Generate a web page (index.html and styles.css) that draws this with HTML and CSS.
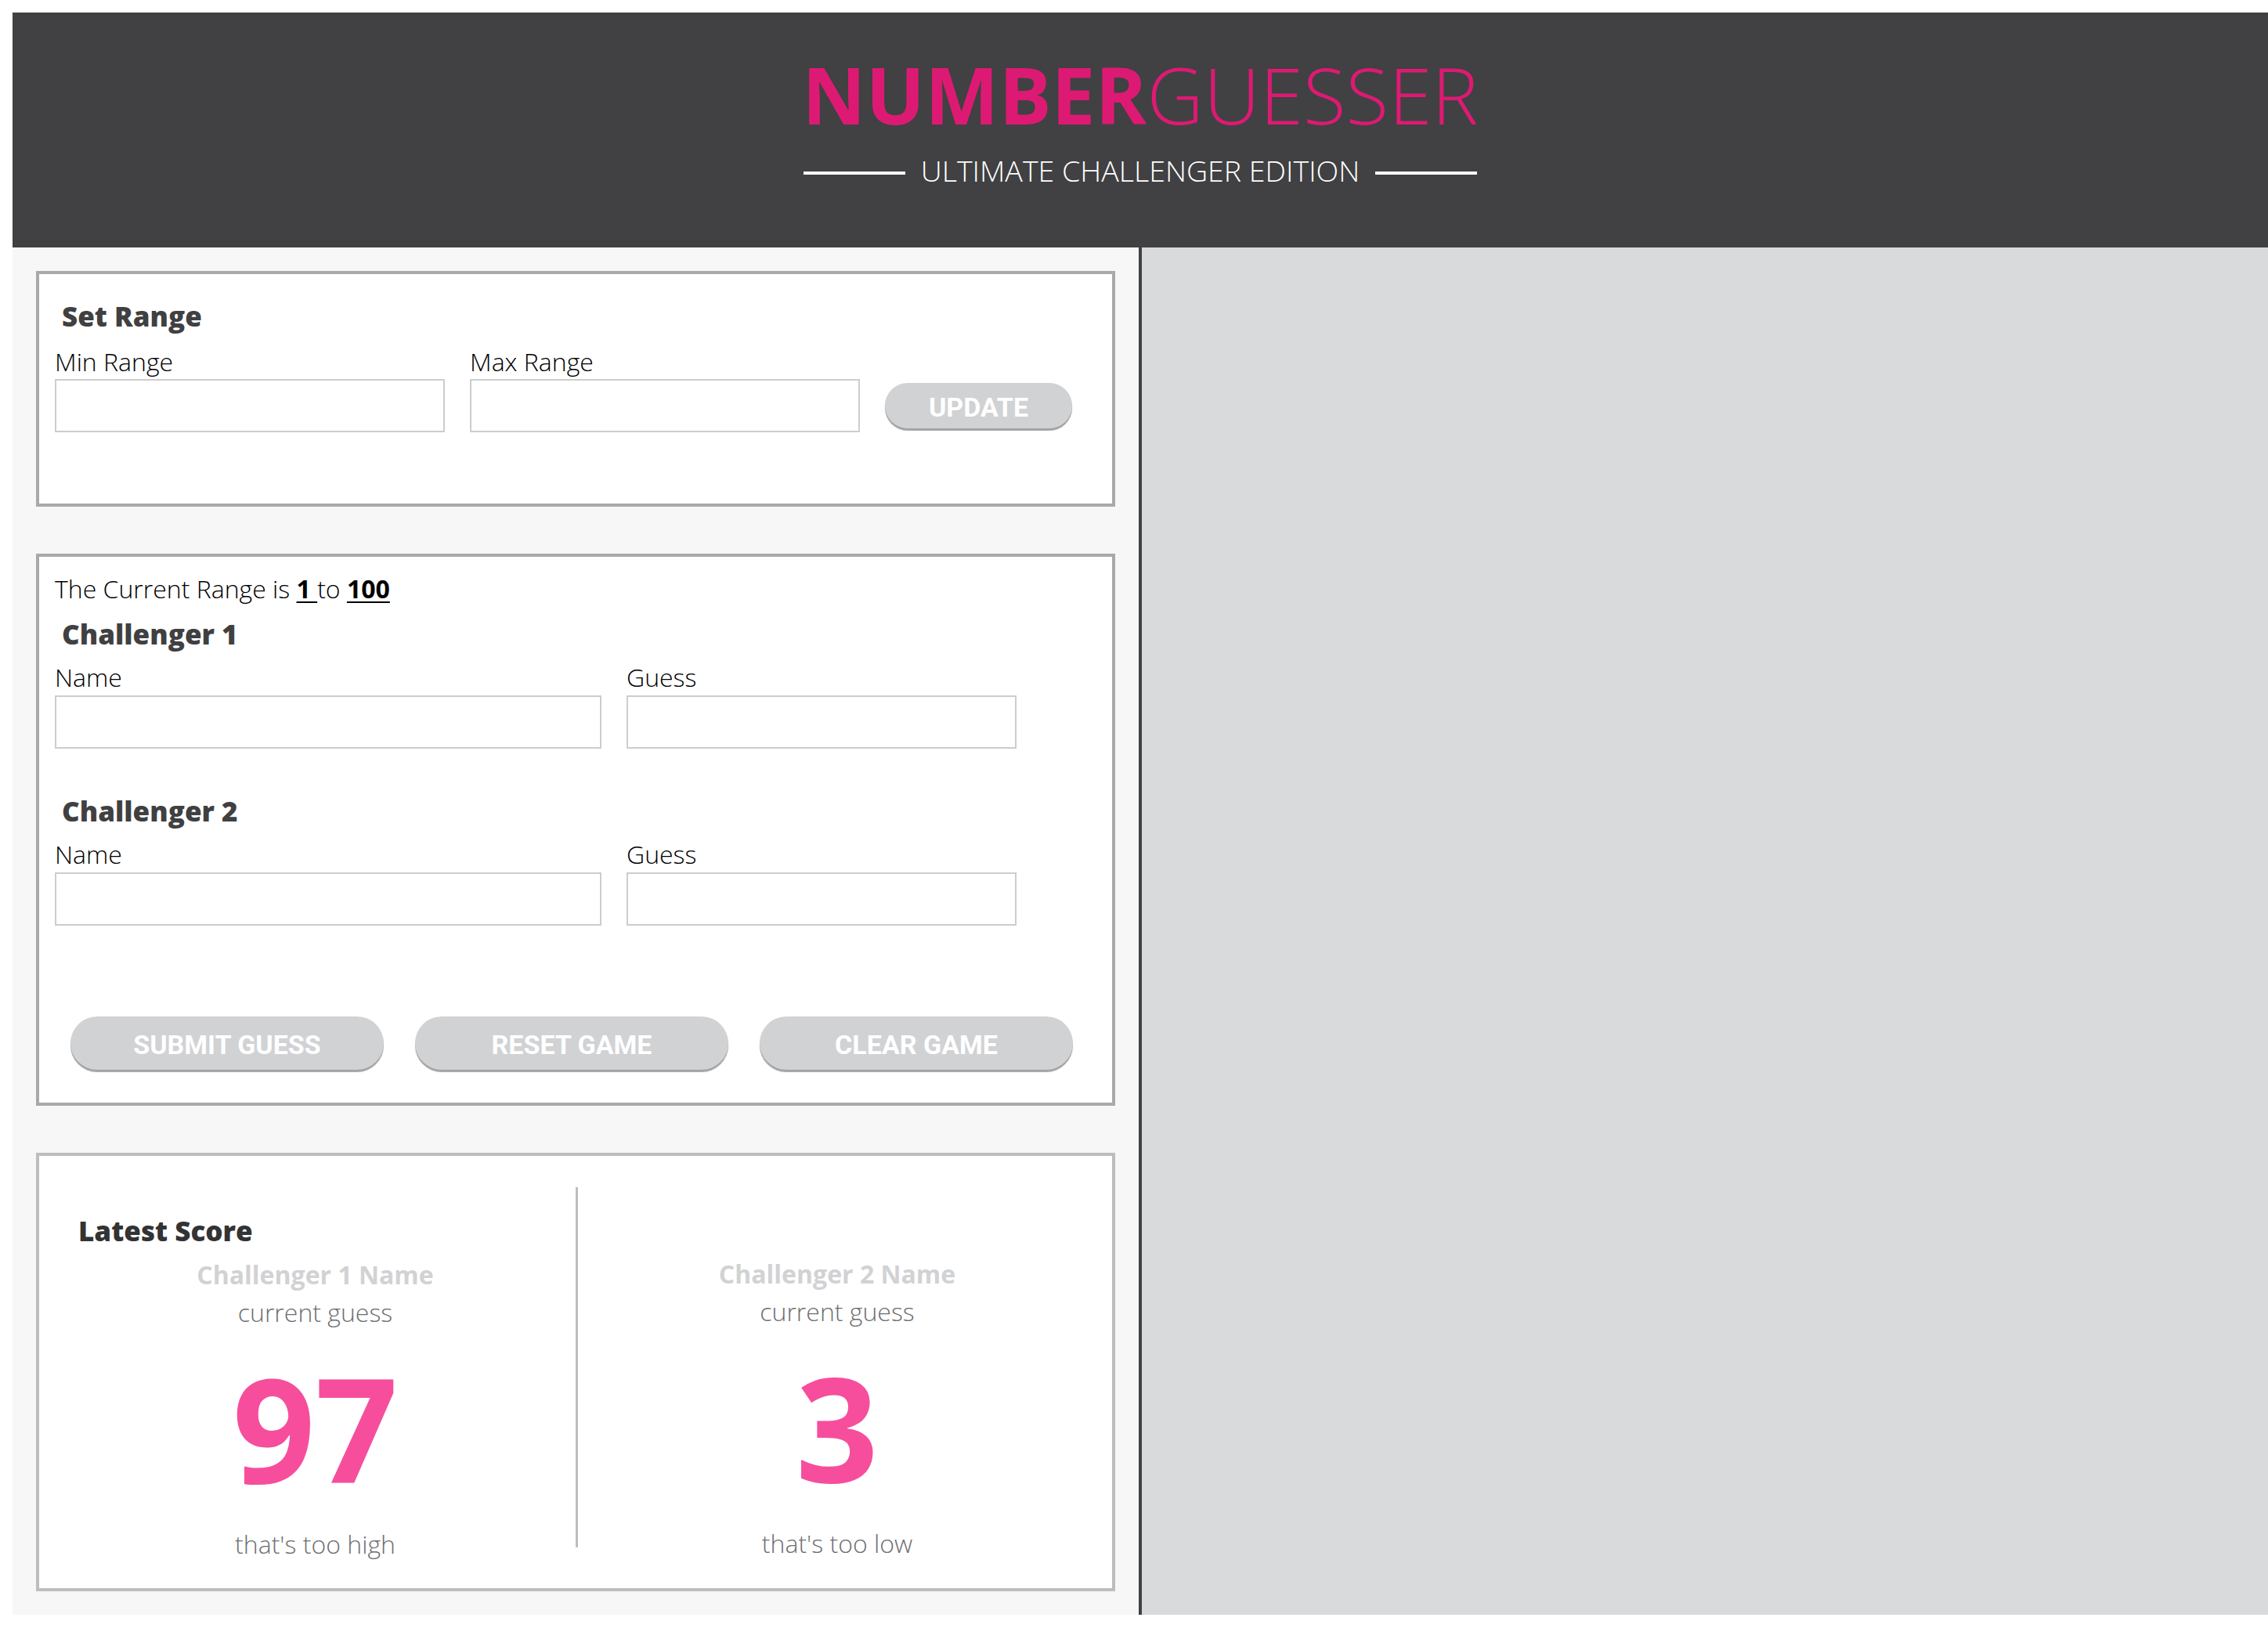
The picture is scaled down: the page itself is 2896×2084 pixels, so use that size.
FILE: index.html
```html
<!DOCTYPE html>
<html lang="en">
<head>
<meta charset="utf-8">
<title>Number Guesser</title>
<link rel="stylesheet" href="styles.css">
</head>
<body>
<header class="masthead">
  <h1 class="title"><span class="title-bold">NUMBER</span><span class="title-light">GUESSER</span></h1>
  <div class="subtitle">
    <span class="rule"></span>
    <span class="subtitle-text">ULTIMATE CHALLENGER EDITION</span>
    <span class="rule"></span>
  </div>
</header>
<main class="layout">
  <section class="game-column">
    <form class="card card-range">
      <h2 class="card-heading">Set Range</h2>
      <div class="field-row field-row-range">
        <label class="field">
          <span class="field-label">Min Range</span>
          <input class="field-input field-input-sm" type="text">
        </label>
        <label class="field">
          <span class="field-label">Max Range</span>
          <input class="field-input field-input-sm" type="text">
        </label>
        <button class="pill pill-update" type="button">UPDATE</button>
      </div>
    </form>

    <form class="card card-guess">
      <p class="range-text">The Current Range is <span class="range-num">1 </span>to <span class="range-num">100</span></p>
      <h2 class="card-heading heading-c1">Challenger 1</h2>
      <div class="field-row field-row-guess">
        <label class="field">
          <span class="field-label">Name</span>
          <input class="field-input field-input-lg" type="text">
        </label>
        <label class="field">
          <span class="field-label">Guess</span>
          <input class="field-input field-input-sm" type="text">
        </label>
      </div>
      <h2 class="card-heading heading-c2">Challenger 2</h2>
      <div class="field-row field-row-guess">
        <label class="field">
          <span class="field-label">Name</span>
          <input class="field-input field-input-lg" type="text">
        </label>
        <label class="field">
          <span class="field-label">Guess</span>
          <input class="field-input field-input-sm" type="text">
        </label>
      </div>
      <div class="button-row">
        <button class="pill pill-wide" type="button">SUBMIT GUESS</button>
        <button class="pill pill-wide" type="button">RESET GAME</button>
        <button class="pill pill-wide" type="button">CLEAR GAME</button>
      </div>
    </form>

    <section class="card card-score">
      <div class="score-col score-col-left">
        <h2 class="score-heading">Latest Score</h2>
        <p class="score-name">Challenger 1 Name</p>
        <p class="score-label">current guess</p>
        <p class="score-number">97</p>
        <p class="score-result">that's too high</p>
      </div>
      <div class="score-col score-col-right">
        <p class="score-name">Challenger 2 Name</p>
        <p class="score-label">current guess</p>
        <p class="score-number">3</p>
        <p class="score-result">that's too low</p>
      </div>
    </section>
  </section>
  <aside class="side-panel"></aside>
</main>
</body>
</html>
```

FILE: styles.css
```css
* {
  box-sizing: border-box;
}

body {
  margin: 16px 0 0 16px;
  font-family: "Open Sans", "Liberation Sans", sans-serif;
  color: #000;
  background: #fff;
}

/* Header */
.masthead {
  height: 300px;
  background: #414042;
  padding-top: 54px;
  display: flex;
  flex-direction: column;
  align-items: center;
}

.title {
  margin: 0;
  font-size: 100px;
  line-height: 100px;
  color: #dd1a73;
  font-weight: 700;
}

.title-light {
  font-weight: 300;
}

.subtitle {
  margin-top: 28px;
  display: flex;
  align-items: center;
  gap: 20px;
}

.rule {
  width: 130px;
  height: 4px;
  background: #fff;
  margin-top: 7px;
}

.subtitle-text {
  font-size: 37.5px;
  line-height: 39px;
  font-weight: 300;
  color: #fff;
}

/* Layout */
.layout {
  display: flex;
}

.game-column {
  width: 1442px;
  flex: none;
  background: #f7f7f7;
  border-right: 4px solid #414042;
  padding: 30px;
  display: flex;
  flex-direction: column;
  gap: 60px;
}

.side-panel {
  flex: 1;
  background: #d9dadc;
}

/* Cards */
.card {
  margin: 0;
  background: #fff;
  border: 4px solid #a9a9a9;
  padding: 0 20px;
}

.card-heading {
  margin: 0 0 0 9px;
  font-size: 35px;
  line-height: 34px;
  font-weight: 800;
  color: #404041;
}

.card-range {
  padding-top: 37px;
  padding-bottom: 91px;
}

.field-row {
  display: flex;
  align-items: flex-end;
  gap: 32px;
}

.field-row-range {
  margin-top: 25px;
}

.field {
  display: flex;
  flex-direction: column;
  gap: 6px;
}

.field-label {
  font-size: 32px;
  line-height: 32px;
  font-weight: 300;
  color: #000;
}

.field-input {
  display: block;
  margin: 0;
  height: 68px;
  border: 2px solid #cdcdcd;
  background: #fff;
  padding: 0 8px;
  font: inherit;
}

.field-input-sm {
  width: 498px;
}

.field-input-lg {
  width: 698px;
}

.pill {
  margin: 0;
  border: none;
  background: #d1d2d4;
  color: #fff;
  font-family: Roboto, "Liberation Sans", sans-serif;
  font-weight: 700;
  font-size: 34px;
  padding: 3px 0 0;
  box-shadow: 0 3px 1px #a3a3a3;
}

.pill-update {
  width: 239px;
  height: 58px;
  border-radius: 29px;
  margin-bottom: 5px;
}

.card-guess {
  padding-top: 25px;
  padding-bottom: 42px;
}

.range-text {
  margin: 0;
  font-size: 32px;
  line-height: 32px;
  font-weight: 300;
}

.range-num {
  font-weight: 700;
  text-decoration: underline;
  text-decoration-thickness: 2px;
  text-underline-offset: 4px;
}

.heading-c1 {
  margin-top: 25px;
}

.heading-c2 {
  margin-top: 63px;
}

.field-row-guess {
  margin-top: 22px;
}

.field-row-guess .field {
  gap: 7px;
}

.button-row {
  display: flex;
  gap: 40px;
  margin: 116px 0 0 20px;
}

.pill-wide {
  width: 400px;
  height: 68px;
  border-radius: 34px;
}

/* Score card */
.card-score {
  border-color: #bdbdbd;
  padding: 40px 20px 52px;
  display: grid;
  grid-template-columns: 1fr 1fr;
}

.score-col {
  height: 460px;
  display: flex;
  flex-direction: column;
  align-items: center;
}

.score-col-right {
  border-left: 3px solid #bdbdbd;
  padding-top: 72px;
}

.score-col p {
  margin: 0;
}

.score-heading {
  align-self: flex-start;
  margin: 39px 0 0 30px;
  font-size: 35px;
  line-height: 34px;
  font-weight: 800;
  color: #333;
}

.score-col .score-name {
  margin-top: 22px;
  font-size: 32px;
  line-height: 33px;
  font-weight: 700;
  color: #d1d2d4;
}

.score-col .score-label {
  margin-top: 16px;
  font-size: 32px;
  line-height: 32px;
  font-weight: 300;
  color: #6d6e71;
}

.score-col .score-number {
  margin-top: 38px;
  font-size: 185px;
  line-height: 185px;
  font-weight: 700;
  color: #f64e9c;
}

.score-col .score-result {
  margin-top: 41px;
  font-size: 32px;
  line-height: 32px;
  font-weight: 300;
  color: #6d6e71;
}
```
